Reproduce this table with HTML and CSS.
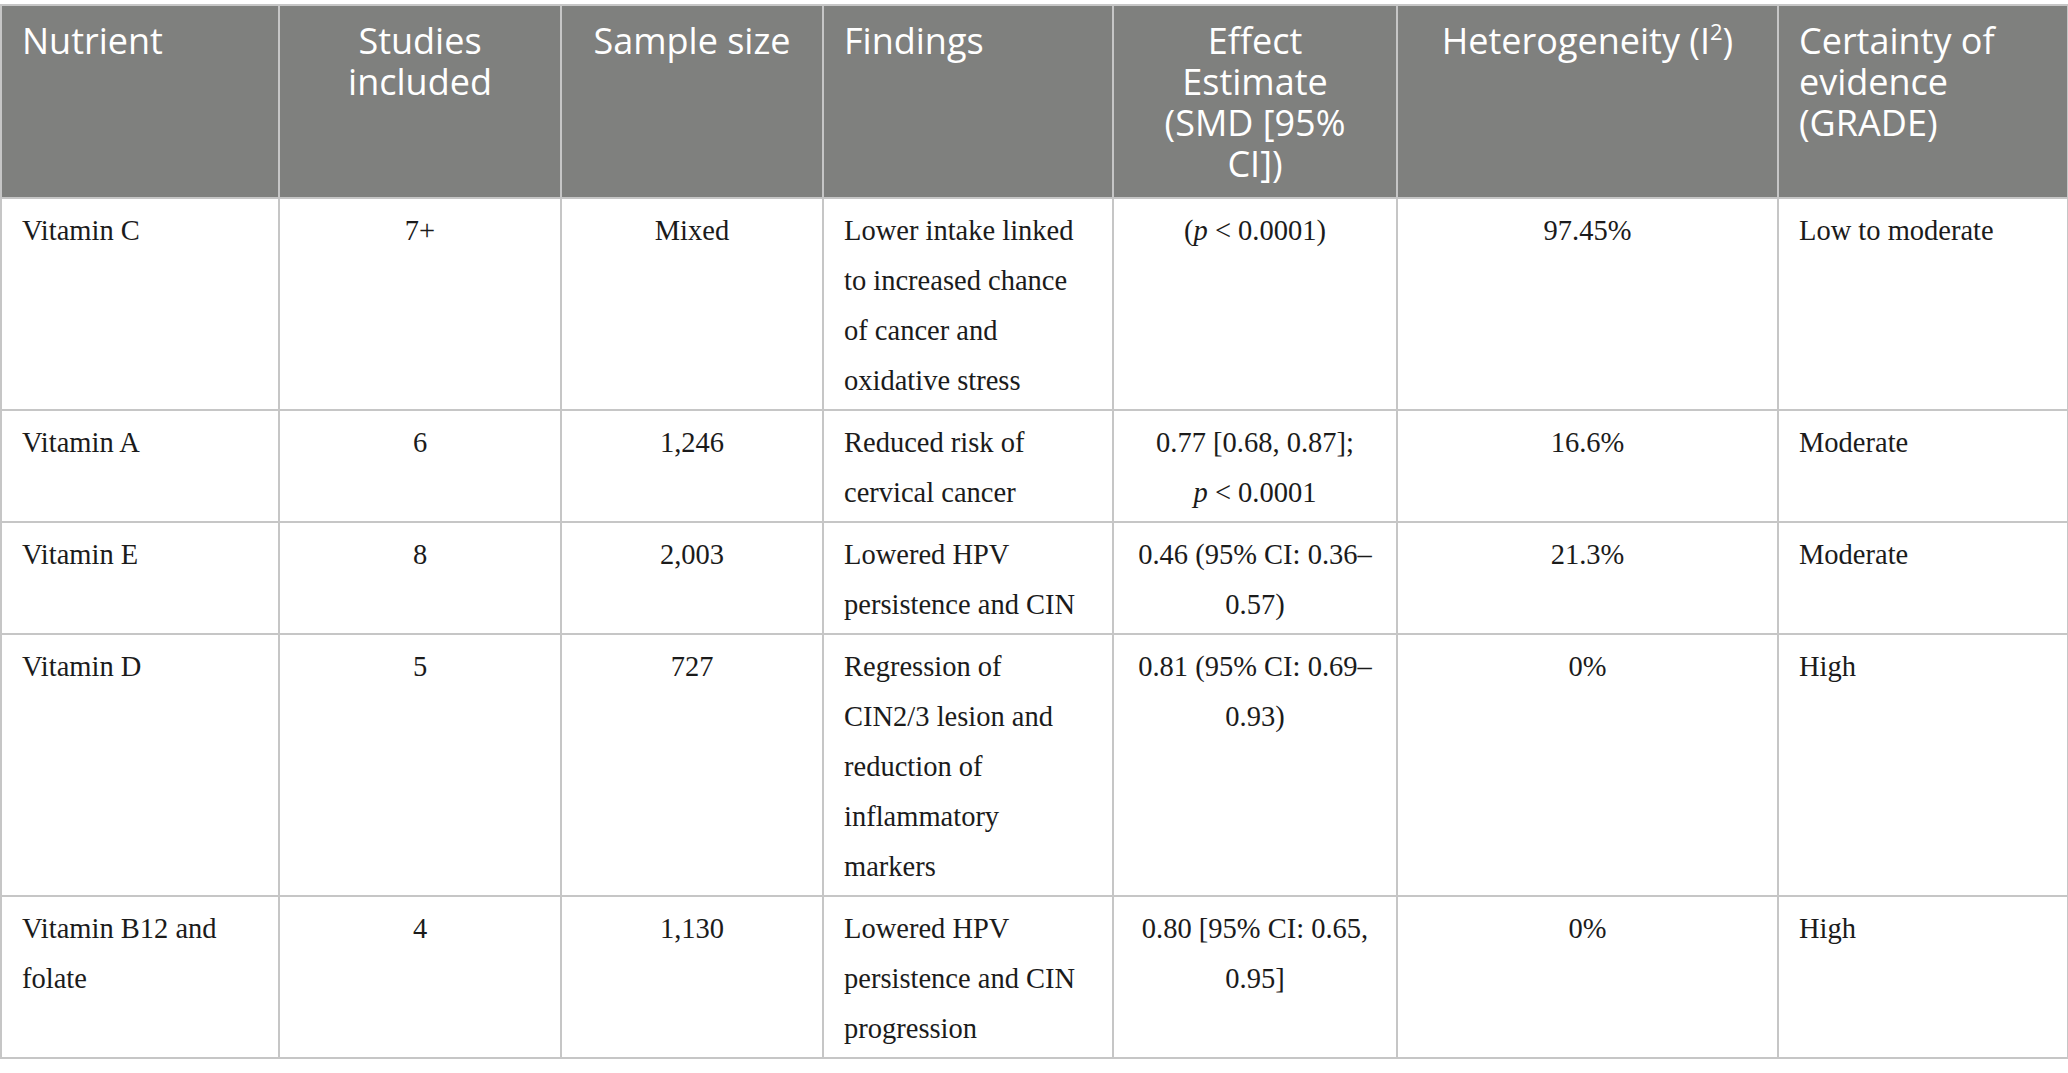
FILE: index.html
```html
<!DOCTYPE html>
<html lang="en">
<head>
<meta charset="utf-8">
<title>Nutrient evidence table</title>
<link rel="stylesheet" href="styles.css">
</head>
<body>
<table class="evidence">
  <colgroup>
    <col class="c-nutrient">
    <col class="c-studies">
    <col class="c-sample">
    <col class="c-findings">
    <col class="c-effect">
    <col class="c-het">
    <col class="c-grade">
  </colgroup>
  <thead>
    <tr>
      <th class="left">Nutrient</th>
      <th>Studies included</th>
      <th>Sample size</th>
      <th class="left">Findings</th>
      <th class="effect">Effect Estimate (SMD [95% CI])</th>
      <th>Heterogeneity (I<sup>2</sup>)</th>
      <th class="left">Certainty of evidence (GRADE)</th>
    </tr>
  </thead>
  <tbody>
    <tr>
      <td class="left">Vitamin C</td>
      <td>7+</td>
      <td>Mixed</td>
      <td class="left findings">Lower intake linked to increased chance of cancer and oxidative stress</td>
      <td>(<i>p</i>&nbsp;&lt;&nbsp;0.0001)</td>
      <td>97.45%</td>
      <td class="left">Low to moderate</td>
    </tr>
    <tr>
      <td class="left">Vitamin A</td>
      <td>6</td>
      <td>1,246</td>
      <td class="left findings">Reduced risk of cervical cancer</td>
      <td>0.77 [0.68, 0.87]; <i>p</i>&nbsp;&lt;&nbsp;0.0001</td>
      <td>16.6%</td>
      <td class="left">Moderate</td>
    </tr>
    <tr>
      <td class="left">Vitamin E</td>
      <td>8</td>
      <td>2,003</td>
      <td class="left findings">Lowered HPV persistence and CIN</td>
      <td>0.46 (95% CI: 0.36–0.57)</td>
      <td>21.3%</td>
      <td class="left">Moderate</td>
    </tr>
    <tr>
      <td class="left">Vitamin D</td>
      <td>5</td>
      <td>727</td>
      <td class="left findings">Regression of CIN2/3 lesion and reduction of inflammatory markers</td>
      <td>0.81 (95% CI: 0.69–0.93)</td>
      <td>0%</td>
      <td class="left">High</td>
    </tr>
    <tr>
      <td class="left">Vitamin B12 and folate</td>
      <td>4</td>
      <td>1,130</td>
      <td class="left findings">Lowered HPV persistence and CIN progression</td>
      <td>0.80 [95% CI: 0.65, 0.95]</td>
      <td>0%</td>
      <td class="left">High</td>
    </tr>
  </tbody>
</table>
</body>
</html>
```

FILE: styles.css
```css
html, body {
  margin: 0;
  padding: 0;
  background: #ffffff;
}

body {
  padding-top: 4px;
}

.evidence {
  width: 2067px;
  border-collapse: collapse;
  table-layout: fixed;
  font-family: "Liberation Serif", "Times New Roman", serif;
}

.c-nutrient { width: 278px; }
.c-studies { width: 282px; }
.c-sample { width: 262px; }
.c-findings { width: 290px; }
.c-effect { width: 284px; }
.c-het { width: 381px; }
.c-grade { width: 290px; }

.evidence th,
.evidence td {
  border: 2px solid #c6c6c6;
  vertical-align: top;
  text-align: center;
}

.evidence th {
  background: #7f807e;
  color: #ffffff;
  font-family: "Open Sans", "Noto Sans", sans-serif;
  font-weight: 400;
  font-size: 36px;
  line-height: 41px;
  padding: 14px 20px 13px;
}

.evidence th.effect {
  padding-left: 24px;
  padding-right: 24px;
}

.evidence th sup {
  font-size: 22px;
  line-height: 0;
  vertical-align: 14px;
}

.evidence td {
  color: #1b1b1b;
  font-size: 28.5px;
  line-height: 50px;
  padding: 7px 20px 3px;
}

.evidence .left {
  text-align: left;
}

.evidence td.findings {
  padding-right: 24px;
}
```
